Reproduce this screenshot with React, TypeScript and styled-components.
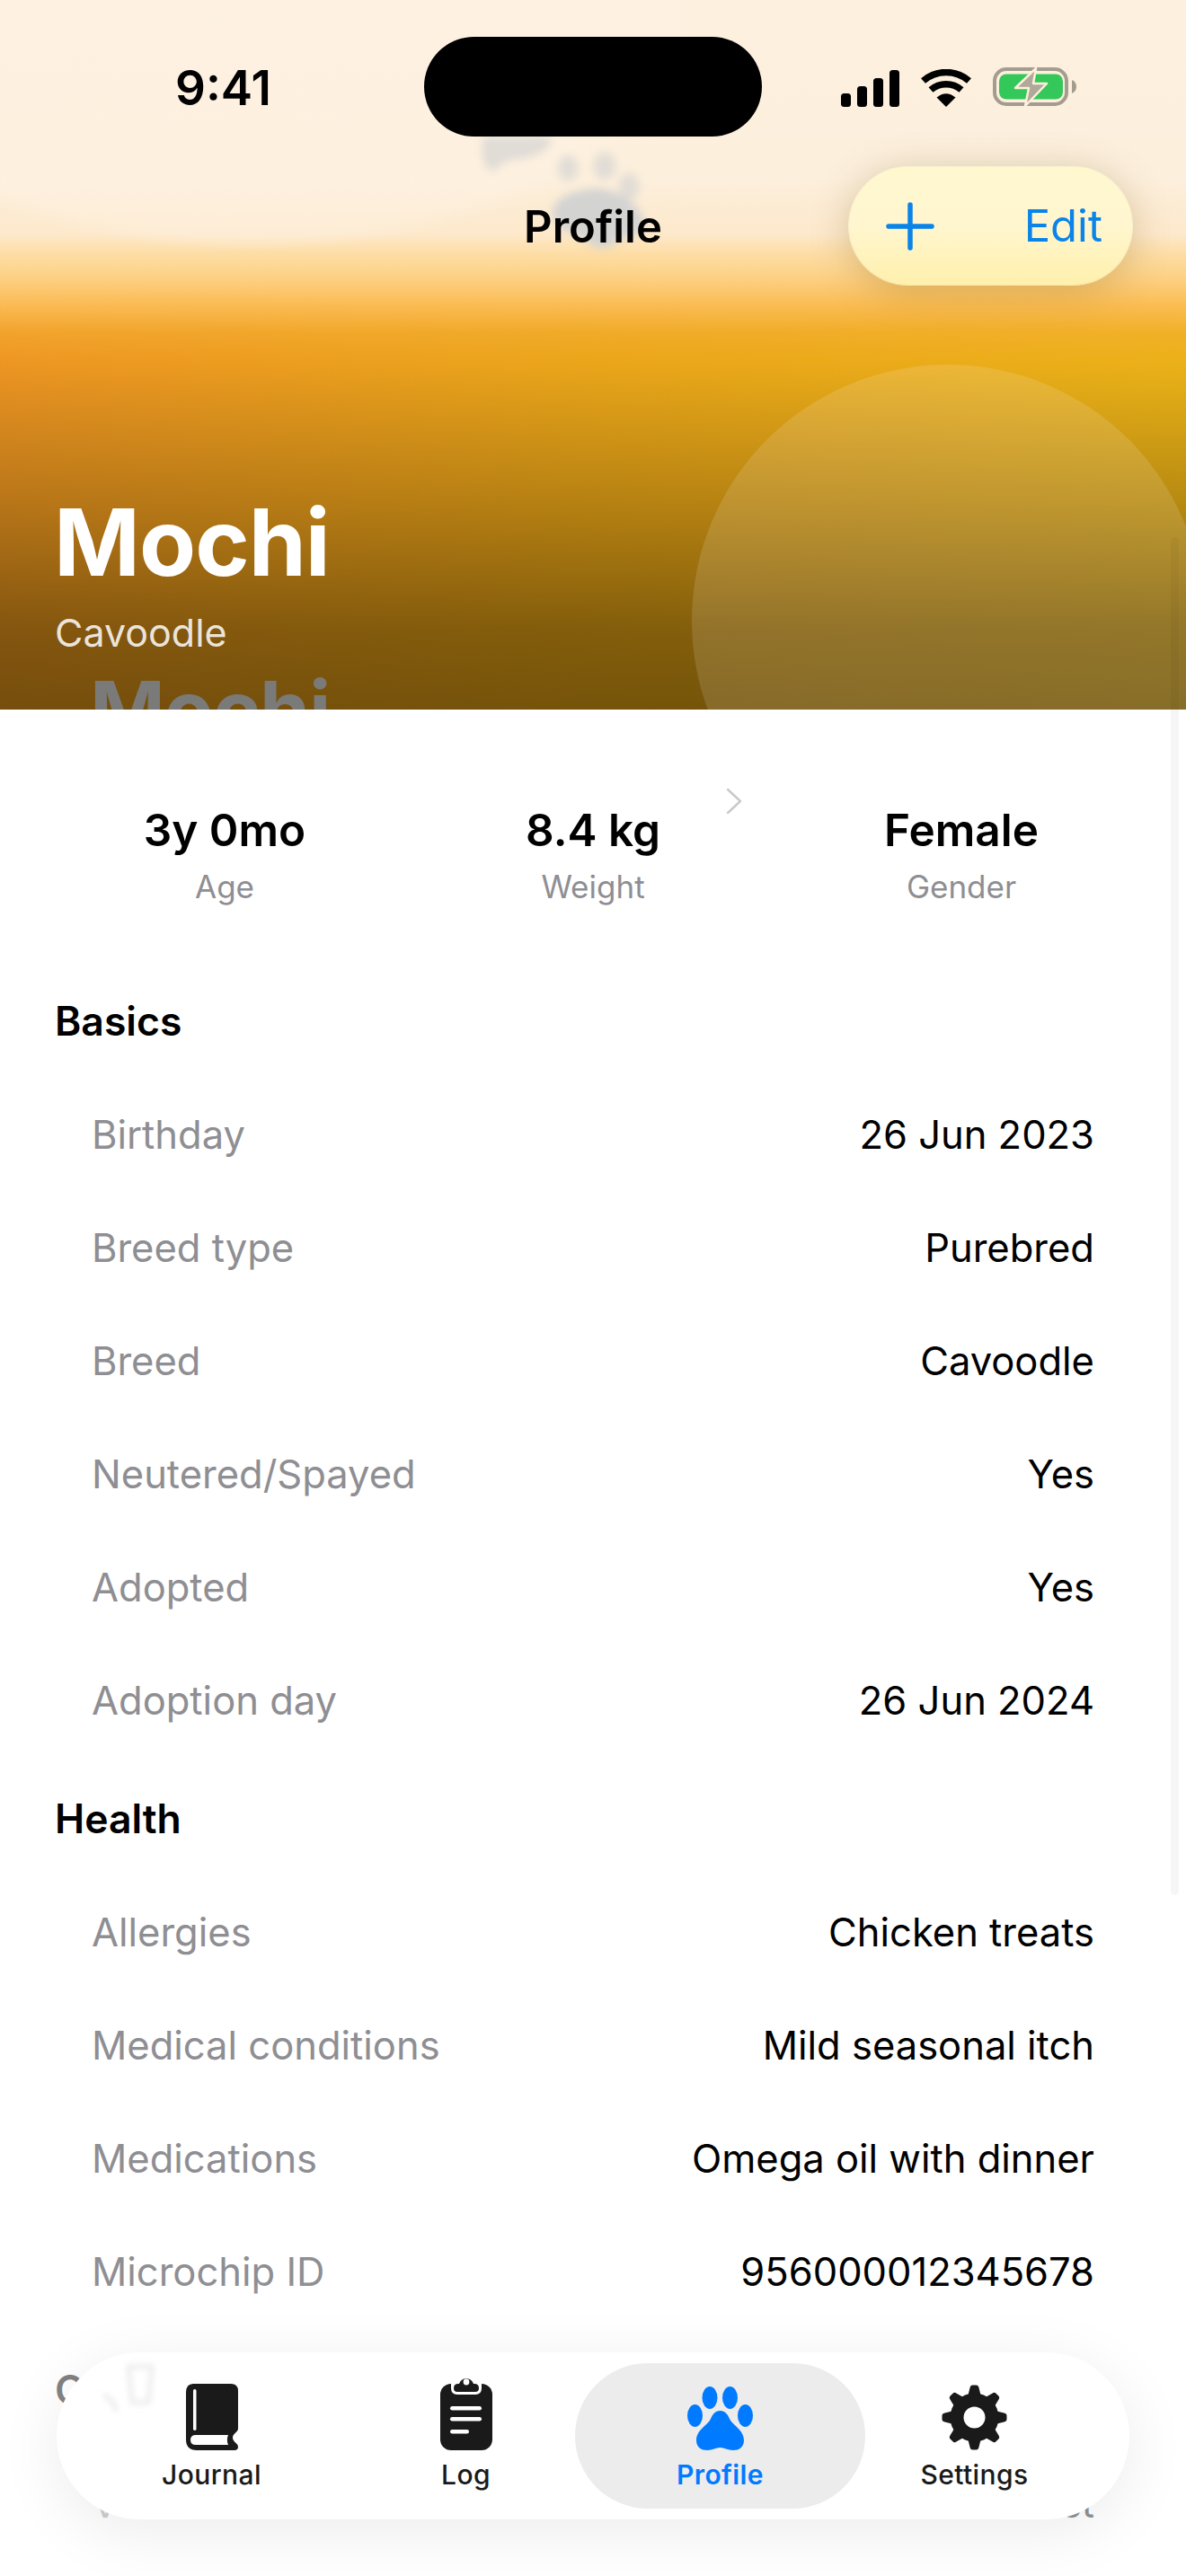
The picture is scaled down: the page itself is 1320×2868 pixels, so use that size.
import * as React from "react"
import styled, { createGlobalStyle } from "styled-components"

const GlobalStyle = createGlobalStyle`
  html, body {
    margin: 0;
    padding: 0;
    background: #fff;
    font-family: Inter, "Noto Sans", sans-serif;
    -webkit-font-smoothing: antialiased;
  }
`

const Phone = styled.div`
  position: relative;
  width: 1320px;
  height: 2868px;
  overflow: hidden;
  background: #fff;
  color: #000;
`

const Hero = styled.header`
  position: relative;
  height: 790px;
  box-sizing: border-box;
  overflow: hidden;
  display: flex;
  flex-direction: column;
  padding-bottom: 61px;
  background:
    radial-gradient(ellipse 500px 280px at 280px 0, rgba(255, 243, 230, 0.4) 0, rgba(255, 243, 230, 0.35) 94%, rgba(255, 243, 230, 0) 100%),
    linear-gradient(180deg, #fdf0df 0, #fcefdc 200px, #fde9cc 260px, #fddfa9 280px, #fdd083 310px, rgba(252, 190, 88, 0.9) 340px, rgba(245, 174, 52, 0.55) 370px, rgba(238, 160, 34, 0.15) 400px, rgba(238, 160, 34, 0) 430px),
    linear-gradient(180deg, rgba(0, 0, 0, 0) 400px, rgba(60, 40, 0, 0.3) 560px, rgba(50, 35, 0, 0.56) 700px, rgba(45, 32, 0, 0.62) 790px),
    linear-gradient(100deg, #ee9424 0%, #eba71a 50%, #ecb518 100%);
`

const Sun = styled.div`
  position: absolute;
  left: 770px;
  top: 406px;
  width: 570px;
  height: 570px;
  border-radius: 50%;
  background: rgba(255, 255, 255, 0.13);
`

const PawGhost = styled.svg`
  position: absolute;
  left: 520px;
  top: 140px;
  width: 240px;
  height: 150px;
  filter: blur(5px);
`

const StatusBar = styled.div`
  position: relative;
  height: 186px;
  flex: none;
  display: flex;
  align-items: flex-start;
  justify-content: space-between;
  box-sizing: border-box;
  padding: 70px 122px 0 195px;
`

const Clock = styled.span`
  font-size: 53px;
  line-height: 56px;
  font-weight: 600;
  color: #000;
`

const StatusIcons = styled.div`
  display: flex;
  align-items: flex-end;
  gap: 23px;
  margin-top: 5px;
`

const Island = styled.div`
  position: absolute;
  left: 472px;
  top: 41px;
  width: 376px;
  height: 111px;
  border-radius: 56px;
  background: #000;
`

const TopBar = styled.div`
  position: relative;
  flex: none;
  height: 131px;
  display: flex;
  align-items: center;
  justify-content: flex-end;
  padding-right: 60px;
`

const TopTitle = styled.h1`
  position: absolute;
  left: 0;
  right: 0;
  top: 37px;
  margin: 0;
  text-align: center;
  font-size: 49px;
  line-height: 60px;
  font-weight: 600;
  color: #000;
`

const EditPill = styled.div`
  width: 315px;
  height: 131px;
  box-sizing: border-box;
  display: flex;
  align-items: center;
  justify-content: space-between;
  padding: 0 33px 0 41px;
  border-radius: 66px;
  background: linear-gradient(180deg, #fff8cf 0%, #fff6cf 50%, #fff0ac 100%);
  box-shadow: 0 0 0 1px rgba(255, 252, 215, 0.7), 0 6px 44px rgba(110, 80, 0, 0.28);
`

const EditLabel = styled.span`
  font-size: 49px;
  line-height: 60px;
  color: #0a84e8;
`

const HeroText = styled.div`
  position: relative;
  margin-top: auto;
  padding-left: 60px;
`

const PetName = styled.h2`
  margin: 0;
  font-size: 103px;
  line-height: 116px;
  font-weight: 700;
  letter-spacing: -1px;
  color: #fff;
`

const PetBreed = styled.div`
  margin-top: 17px;
  padding-left: 1px;
  font-size: 43px;
  line-height: 50px;
  color: rgba(255, 255, 255, 0.85);
`

const NameEcho = styled.div`
  position: absolute;
  left: 100px;
  top: 741px;
  font-size: 90px;
  line-height: 100px;
  font-weight: 700;
  letter-spacing: -1px;
  color: #7a7a78;
`

const Body = styled.main`
  display: flex;
  flex-direction: column;
  padding: 0 102px 0 61px;
`

const Stats = styled.section`
  position: relative;
  display: grid;
  grid-template-columns: repeat(3, 410px);
  margin: 103px 0 0 -16px;
  height: 181px;
`

const Stat = styled.div`
  display: flex;
  flex-direction: column;
  align-items: center;
`

const StatValue = styled.div`
  font-size: 49.5px;
  line-height: 62px;
  font-weight: 600;
`

const StatLabel = styled.div`
  margin-top: 8px;
  font-size: 35px;
  line-height: 48px;
  color: #8e8e93;
`

const Chevron = styled.svg`
  position: absolute;
  left: 763px;
  top: -16px;
  width: 18px;
  height: 30px;
`

const SectionTitle = styled.h3`
  margin: 0;
  height: 126px;
  display: flex;
  align-items: center;
  font-size: 44.5px;
  font-weight: 600;
  color: #000;
`

const Group = styled.section`
  margin-bottom: 6px;
`

const Row = styled.div`
  height: 126px;
  display: flex;
  align-items: center;
  justify-content: space-between;
  padding-left: 41px;
  font-size: 43.5px;
`

const RowLabel = styled.span`
  color: #8e8e93;
`

const RowValue = styled.span`
  color: #000;
`

const ScrollHint = styled.div`
  position: absolute;
  left: 1303px;
  top: 598px;
  width: 9px;
  height: 1512px;
  border-radius: 5px;
  background: rgba(0, 0, 0, 0.035);
`

const BottomFog = styled.div`
  position: absolute;
  left: 0;
  right: 0;
  top: 2540px;
  bottom: 0;
  background: linear-gradient(180deg, rgba(255, 255, 255, 0) 0, rgba(255, 255, 255, 0.5) 90px, rgba(255, 255, 255, 0.6) 100%);
`

const TabBar = styled.nav`
  position: absolute;
  left: 63px;
  top: 2619px;
  width: 1194px;
  height: 186px;
  box-sizing: border-box;
  display: flex;
  padding: 0 31px;
  border-radius: 93px;
  background: #fff;
  box-shadow: 0 14px 70px rgba(0, 0, 0, 0.08);
`

const Smudge = styled.svg`
  position: absolute;
  left: 40px;
  top: 12px;
  width: 70px;
  height: 60px;
  filter: blur(3px);
`

const Tab = styled.div<{ $active?: boolean }>`
  position: relative;
  flex: 1;
  display: flex;
  flex-direction: column;
  align-items: center;
  color: ${p => (p.$active ? "#007aff" : "#1a1a1a")};

  ${p =>
    p.$active &&
    `
    &::before {
      content: "";
      position: absolute;
      left: -20px;
      right: -20px;
      top: 12px;
      bottom: 12px;
      border-radius: 81px;
      background: #ececec;
    }
  `}
`

const TabIconSlot = styled.div`
  position: relative;
  height: 109px;
  display: flex;
  align-items: flex-end;
`

const TabLabel = styled.span<{ $active?: boolean }>`
  position: relative;
  margin-top: 9px;
  font-size: 30px;
  line-height: 36px;
  letter-spacing: 0.4px;
  font-weight: ${p => (p.$active ? 600 : 500)};
`

const SignalIcon = () => (
  <svg width="65" height="41" viewBox="0 0 65 41" fill="#000">
    <rect x="0" y="26" width="11" height="15" rx="3.5" />
    <rect x="18" y="18" width="11" height="23" rx="3.5" />
    <rect x="36" y="9" width="11" height="32" rx="3.5" />
    <rect x="54" y="0" width="11" height="41" rx="3.5" />
  </svg>
)

const WifiIcon = () => (
  <svg width="58" height="42" viewBox="0 0 58 42">
    <path d="M29 42 L18.5 31.5 Q29 23 39.5 31.5 Z" fill="#000" />
    <path d="M12 23 A26 26 0 0 1 46 23" fill="none" stroke="#000" strokeWidth="7.5" />
    <path d="M3.5 13 A39 39 0 0 1 54.5 13" fill="none" stroke="#000" strokeWidth="7.5" />
  </svg>
)

const BatteryIcon = () => (
  <svg width="93" height="44" viewBox="0 0 93 44">
    <rect x="2" y="2" width="80" height="39" rx="13" fill="none" stroke="#a49c8f" strokeWidth="4" />
    <rect x="7" y="7.5" width="71" height="28" rx="8" fill="#34c759" />
    <path d="M88 14 Q93 16 93 21.5 Q93 27 88 29 Z" fill="#a49c8f" />
    <path
      d="M48 1 L25 23 H40 L36 43 L60 18 H45 Z"
      fill="#b0a899"
      stroke="#fdf0dc"
      strokeWidth="2.5"
      strokeLinejoin="round"
    />
  </svg>
)

const PlusIcon = () => (
  <svg width="54" height="54" viewBox="0 0 54 54" stroke="#0a84e8" strokeWidth="5.5" strokeLinecap="round">
    <path d="M27 3 V51 M3 27 H51" />
  </svg>
)

const BookIcon = () => (
  <svg width="58" height="74" viewBox="0 0 58 74">
    <path
      d="M8 0 H50 Q58 0 58 8 V50 C58 54 52 55 52 60 C52 65 58 66 58 70 Q58 74 54 74 H12 Q0 74 0 62 V10 Q0 0 8 0 Z"
      fill="currentColor"
    />
    <rect x="8" y="6" width="3.5" height="46" rx="1.7" fill="#fff" />
    <path d="M11 57 H47 C45.5 60 45.5 65 47 68 H11 Q5 68 5 62.5 Q5 57 11 57 Z" fill="#fff" />
  </svg>
)

const ClipboardIcon = () => (
  <svg width="58" height="83" viewBox="0 0 58 83">
    <rect x="0" y="9" width="58" height="74" rx="12" fill="currentColor" />
    <path d="M12 4 H46 V14 Q46 21 39 21 H19 Q12 21 12 14 Z" fill="#fff" />
    <path d="M15 14 Q15 9 20 9 H21 A8.5 8.5 0 0 1 37 9 H38 Q43 9 43 14 Q43 18 39 18 H19 Q15 18 15 14 Z" fill="currentColor" />
    <circle cx="29" cy="7" r="3.4" fill="#fff" />
    <rect x="11" y="34" width="35" height="4.6" rx="2.3" fill="#fff" />
    <rect x="11" y="46" width="35" height="4.6" rx="2.3" fill="#fff" />
    <rect x="11" y="60" width="21" height="4.6" rx="2.3" fill="#fff" />
  </svg>
)

const PAW_PAD =
  "M36.5 27 C42 27 45 31 47 36 C50 43 63 48 63 60 C63 68 57 71 51 71 C45 71 41 68 36.5 68 C32 68 28 71 22 71 C16 71 10 68 10 60 C10 48 23 43 26 36 C28 31 31 27 36.5 27 Z"

const PawIcon = () => (
  <svg width="73" height="71" viewBox="0 0 73 71" fill="currentColor">
    <ellipse cx="25" cy="12.5" rx="8.5" ry="12.5" />
    <ellipse cx="47.5" cy="12.5" rx="8.5" ry="12.5" />
    <ellipse cx="8.5" cy="32.5" rx="8.5" ry="12.5" />
    <ellipse cx="64.5" cy="32.5" rx="8.5" ry="12.5" />
    <path d={PAW_PAD} />
  </svg>
)

const GearIcon = () => (
  <svg width="73" height="73" viewBox="-36.5 -36.5 73 73" fill="currentColor">
    {[0, 45, 90, 135, 180, 225, 270, 315].map(a => (
      <path key={a} d="M-7 -25 L-5 -33 Q-4.4 -36 -2 -36 H2 Q4.4 -36 5 -33 L7 -25 Z" transform={`rotate(${a})`} />
    ))}
    <circle r="27" />
    <circle r="12" fill="#fff" />
  </svg>
)

const rows = {
  basics: [
    ["Birthday", "26 Jun 2023"],
    ["Breed type", "Purebred"],
    ["Breed", "Cavoodle"],
    ["Neutered/Spayed", "Yes"],
    ["Adopted", "Yes"],
    ["Adoption day", "26 Jun 2024"],
  ],
  health: [
    ["Allergies", "Chicken treats"],
    ["Medical conditions", "Mild seasonal itch"],
    ["Medications", "Omega oil with dinner"],
    ["Microchip ID", "956000012345678"],
  ],
  care: [["Vet", "Dr. Ann West"]],
}

function InfoGroup({ title, items }: { title: string; items: string[][] }) {
  return (
    <Group>
      <SectionTitle>{title}</SectionTitle>
      {items.map(([label, value]) => (
        <Row key={label}>
          <RowLabel>{label}</RowLabel>
          <RowValue>{value}</RowValue>
        </Row>
      ))}
    </Group>
  )
}

export default function App() {
  return (
    <Phone>
      <GlobalStyle />
      <Hero>
        <Sun />
        <PawGhost viewBox="0 0 240 150" fill="#d3d3d2">
          <path d="M18 12 H93 C95 30 70 36 50 38 C35 40 35 50 28 50 C18 50 15 30 18 12 Z" opacity="0.7" />
          <ellipse cx="112" cy="47" rx="11" ry="14" opacity="0.65" />
          <ellipse cx="153" cy="45" rx="12" ry="15" opacity="0.65" />
          <ellipse cx="180" cy="68" rx="11" ry="15" opacity="0.65" />
          <path d="M140 70 C170 68 198 95 197 108 C195 125 180 120 165 130 C155 140 140 137 130 125 C110 118 92 110 95 95 C98 80 118 72 140 70 Z" />
        </PawGhost>
        <StatusBar>
          <Clock>9:41</Clock>
          <StatusIcons>
            <SignalIcon />
            <WifiIcon />
            <BatteryIcon />
          </StatusIcons>
        </StatusBar>
        <TopBar>
          <TopTitle>Profile</TopTitle>
          <EditPill>
            <PlusIcon />
            <EditLabel>Edit</EditLabel>
          </EditPill>
        </TopBar>
        <HeroText>
          <PetName>Mochi</PetName>
          <PetBreed>Cavoodle</PetBreed>
        </HeroText>
        <NameEcho>Mochi</NameEcho>
      </Hero>
      <Island />

      <Body>
        <Stats>
          <Chevron viewBox="0 0 18 30" fill="none" stroke="#c9c9cc" strokeWidth="2.4" strokeLinecap="round" strokeLinejoin="round">
            <path d="M2 2 L16 15 L2 28" />
          </Chevron>
          <Stat>
            <StatValue>3y 0mo</StatValue>
            <StatLabel>Age</StatLabel>
          </Stat>
          <Stat>
            <StatValue>8.4 kg</StatValue>
            <StatLabel>Weight</StatLabel>
          </Stat>
          <Stat>
            <StatValue>Female</StatValue>
            <StatLabel>Gender</StatLabel>
          </Stat>
        </Stats>
        <InfoGroup title="Basics" items={rows.basics} />
        <InfoGroup title="Health" items={rows.health} />
        <InfoGroup title="Care" items={rows.care} />
      </Body>

      <ScrollHint />
      <BottomFog />

      <TabBar>
        <Smudge viewBox="0 0 70 60" fill="none" stroke="#ececec" strokeWidth="5">
          <path d="M12 36 Q24 40 26 54" />
          <path d="M40 4 H66 L62 44 H44 Z" />
        </Smudge>
        <Tab>
          <TabIconSlot>
            <BookIcon />
          </TabIconSlot>
          <TabLabel>Journal</TabLabel>
        </Tab>
        <Tab>
          <TabIconSlot>
            <ClipboardIcon />
          </TabIconSlot>
          <TabLabel>Log</TabLabel>
        </Tab>
        <Tab $active>
          <TabIconSlot>
            <PawIcon />
          </TabIconSlot>
          <TabLabel $active>Profile</TabLabel>
        </Tab>
        <Tab>
          <TabIconSlot>
            <GearIcon />
          </TabIconSlot>
          <TabLabel>Settings</TabLabel>
        </Tab>
      </TabBar>
    </Phone>
  )
}
